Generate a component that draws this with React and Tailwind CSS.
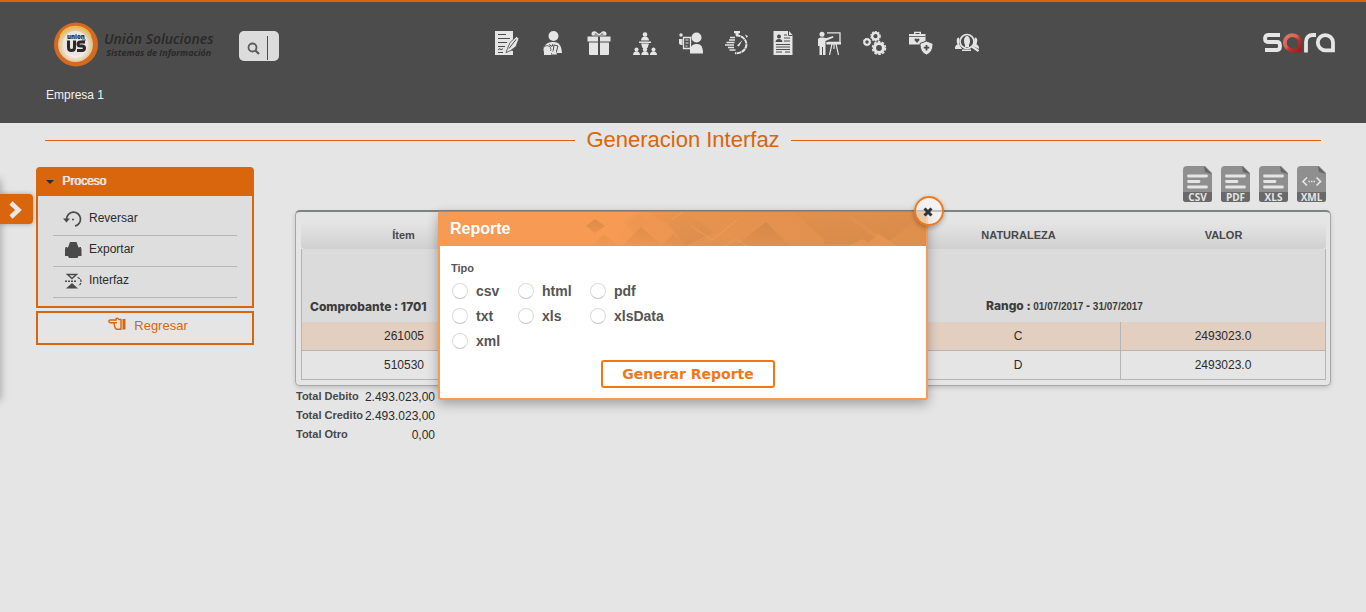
import React from "react";

const Svg = ({ children, w = 24, h = 24, className = "" }) => (
  <svg width={w} height={h} viewBox={`0 0 ${w} ${h}`} className={className} fill="#e5e5e5" aria-hidden="true">
    {children}
  </svg>
);
const BG = "#4c4c4c";

const navIcons = [
  ["Contratos", (
    <Svg>
      <path d="M0 0h18v9l-3 4-1 6 4 1v4H0z" />
      <path d="M3 3.500h8M3 7.500h12M3 11.500h9M3 15.500h7M3 19l2-1.500 1 1.500 2-1.500M3 21.500h5" stroke={BG} strokeWidth="1" fill="none" />
      <path d="M21.500 5.500l2.500 2-3 8-6 4.500-4 1.500 1.500-4 2.500-6z" stroke={BG} strokeWidth=".8" />
      <path d="M21 8.500l-7 9" stroke={BG} strokeWidth="1" />
    </Svg>
  )],
  ["Empleados", (
    <Svg>
      <circle cx="12.500" cy="5" r="5" />
      <path d="M3.500 16c1-4 5-5 9-5 5 0 8 3 8.500 11H8z" />
      <path d="M8 13.500l3 2 1-2.500M12 21l1-7 4 1-2 7" stroke={BG} strokeWidth="1" fill="none" />
      <circle cx="6" cy="18.500" r="4" stroke={BG} strokeWidth=".8" />
      <path d="M3 20h7v4H3z" />
      <path d="M10 23.500l4-6 2 6z" />
    </Svg>
  )],
  ["Beneficios", (
    <Svg>
      <path d="M5 4.500C3 1 7-.5 9 .7L12 3l3-2.300c2-1.200 6 .3 4 3.800z" />
      <path d="M7.500 3.500c0-1.300 2-1.300 3.500 0zM16.500 3.500c0-1.300-2-1.300-3.500 0z" fill={BG} />
      <path d="M.5 5.500h23v5H.500zM2 11.500h9V24H3q-1 0-1-1zM13 11.500h9V23q0 1-1 1h-8z" />
      <path d="M11 5.500h2V24h-2z" fill={BG} />
    </Svg>
  )],
  ["Organigrama", (
    <Svg>
      <circle cx="12" cy="3.500" r="2.300" />
      <path d="M8 9.500c0-5.500 8-5.500 8 0zM6 10.500h12v1.500H6zM8 12.500h8L14.500 17h-5z" />
      <circle cx="3.500" cy="18.500" r="2" /><circle cx="12" cy="18.500" r="2.200" /><circle cx="20.500" cy="18.500" r="2" />
      <path d="M0 24c0-5 7-5 7 0zM8.300 24c0-5 7.400-5 7.400 0zM17 24c0-5 7-5 7 0z" />
    </Svg>
  )],
  ["Seleccion", (
    <Svg>
      <circle cx="17.500" cy="6.500" r="5" />
      <path d="M11 22.500V18l2-3.500c2-1.500 3-1.500 5-1.500 4 0 6 3 6 9.500z" />
      <path d="M4.500 6.500h7v11h-7z" fill={BG} stroke="#e5e5e5" strokeWidth="1.300" />
      <path d="M6.500 9h3M6.500 12h3M6.500 15h2" stroke="#e5e5e5" strokeWidth="1" />
      <path d="M0 8h3.500v6Q0 14 0 12z" /><circle cx="2" cy="4" r="1.700" />
    </Svg>
  )],
  ["Tiempos", (
    <Svg>
      <path d="M11 4.600A9.500 9.500 0 0 1 21.500 13 9.500 9.500 0 0 1 10 22" stroke="#e5e5e5" strokeWidth="2" fill="none" strokeDasharray="4.500 .5" />
      <path d="M9 0h6v2.200H9zM10.500 2h3v2.500h-3zM20 3.500l3 1.500-1.300 2zM12 14.500L17.500 9 14 15.500z" />
      <path d="M5 6.500h5M4 9h6M1.500 11.500h8M0 14h9M3 16.500h6M4.500 19h6" stroke="#e5e5e5" strokeWidth="1.500" />
    </Svg>
  )],
  ["Hoja de vida", (
    <Svg>
      <path d="M2.500 0H18l3.500 4v20h-19z" />
      <path d="M17.500 0v4.500h4M13 4h3M13 7h6M13 10h6M5 13.500h14M5 16h14M5 18.500h14M5 21h6M14 21h5" stroke={BG} strokeWidth="1" fill="none" />
      <circle cx="8" cy="5.500" r="2" fill={BG} /><path d="M4.500 11c0-4 7-4 7 0z" fill={BG} />
    </Svg>
  )],
  ["Capacitacion", (
    <Svg>
      <circle cx="5" cy="3.200" r="2.500" />
      <path d="M1 8c0-2 7-2 8-.8L16 5l.5 1.500L8.500 10v14H6v-8H5v8H2.500V15H1z" />
      <path d="M10 1.800h13v9.700H11" stroke="#e5e5e5" strokeWidth="1.300" fill="none" />
      <path d="M10 11.500h14V13H10zM15 13l-2.500 11M19 13l2.500 11M17 13v5" stroke="#e5e5e5" strokeWidth="1.200" />
    </Svg>
  )],
  ["Procesos", (
    <Svg>
      <g fill="none" stroke="#e5e5e5">
        <circle cx="12.500" cy="5.200" r="3.300" strokeWidth="2.400" />
        <circle cx="12.500" cy="5.200" r="4.700" strokeWidth="1.200" strokeDasharray="1.800 1.200" />
        <circle cx="4" cy="11" r="2.700" strokeWidth="2" />
        <circle cx="4" cy="11" r="3.700" strokeWidth="1" strokeDasharray="1.500 1" />
        <circle cx="16" cy="17" r="4.500" strokeWidth="3.200" />
        <circle cx="16" cy="17" r="6.500" strokeWidth="1.500" strokeDasharray="2.600 1.480" />
      </g>
    </Svg>
  )],
  ["Salud", (
    <Svg>
      <path d="M5 3V.7h7V3h4.500v9L12 13.500H0V3z" />
      <path d="M6.500 3V2h4v1z" fill={BG} />
      <path d="M0 5.500h16.500" stroke={BG} strokeWidth=".8" />
      <path d="M8 12L5.500 9c0-2 2-2 2.500-.7.500-1.300 2.500-1.300 2.500.7z" fill={BG} />
      <path d="M17.500 10l6.500 2.500c0 6-2 9.500-6.500 11.500-4.500-2-6.500-5.500-6.500-11.500z" stroke={BG} strokeWidth="1" />
      <path d="M17.500 14v5.500M14.800 16.700h5.500" stroke={BG} strokeWidth="1.800" />
    </Svg>
  )],
  ["Consultas", (
    <Svg>
      <circle cx="12" cy="10.500" r="7" fill="none" stroke="#e5e5e5" strokeWidth="1.700" />
      <ellipse cx="12" cy="10" rx="3" ry="5" />
      <path d="M10 14h4v2h-4z" />
      <path d="M4 6.500c-3 0-2.500 4-1.500 7C0 14.500 0 16 0 18h7l-3-5zM20 6.500c3 0 2.500 4 1.500 7C24 14.500 24 16 24 18l-6-3zM7 18.500h9v1.500H7z" />
      <path d="M17 15.500l6.500 4.500" stroke="#e5e5e5" strokeWidth="2.200" />
    </Svg>
  )],
];

const BrandLogo = () => (
  <a href="#inicio" className="flex w-[162px] shrink-0 items-center gap-[5px] pt-0.5 whitespace-nowrap text-[#2a2829]" aria-label="Unión Soluciones">
    <svg width="46" height="45" viewBox="0 0 46 45" className="shrink-0">
      <defs>
        <radialGradient id="ring" cx="50%" cy="55%" r="50%">
          <stop offset="0.500" stopColor="#ffffff" /><stop offset=".72" stopColor="#e8dcc8" /><stop offset="1" stopColor="#e3bf7c" />
        </radialGradient>
      </defs>
      <circle cx="23" cy="22.500" r="22" fill="#d46a22" />
      <circle cx="22.500" cy="22.500" r="17.500" fill="url(#ring)" />
      <path d="M7 14a17.500 17.500 0 0 1 31 0" fill="none" stroke="#eebd3f" strokeWidth="1.500" />
      <circle cx="22.500" cy="21.500" r="12.500" fill="#e9e6e2" />
      <text x="14" y="16.500" fontFamily="Open Sans" fontWeight="800" fontSize="6" fill="#2a2829">union</text>
      <path d="M29 18h4" stroke="#b3382b" strokeWidth="1" />
      <g fill="none" stroke="#2a2829" strokeWidth="3">
        <path d="M15.500 18.500v7q0 3 3 3t3-3v-7M32 20h-4.500q-2.500 0-2.500 2t2.500 2h1.500q2.500 0 2.500 2.200t-2.500 2.300h-5" />
      </g>
    </svg>
    <span className="flex flex-col items-center font-['Open_Sans',sans-serif] italic">
      <span className="text-[14px] leading-4 font-semibold">Unión Soluciones</span>
      <span className="text-[9px] leading-[11px] font-bold">Sistemas de Información</span>
    </span>
  </a>
);

const SaraLogo = () => (
  <svg width="72" height="20" viewBox="0 0 72 20" role="img" aria-label="sara">
    <defs>
      <linearGradient id="sara-red" x1="0" y1="0" x2="1" y2="1">
        <stop offset="0" stopColor="#e07a62" /><stop offset=".45" stopColor="#d8604d" /><stop offset=".6" stopColor="#bf322b" /><stop offset="1" stopColor="#a01d1d" />
      </linearGradient>
    </defs>
    <g fill="none" strokeWidth="3.800" stroke="#e5e5e5">
      <path d="M17 2H5q-3 0-3 3.500T5 9h9q3 0 3 4t-3 4H2" />
      <path d="M43 19.500V9q0-7 7-7h3" />
      <path d="M70 17.300h-7.500A7.600 7.600 0 1 1 70 9.500z" />
      <path d="M37 17.300h-7.500A7.600 7.600 0 1 1 37 9.500z" stroke="url(#sara-red)" />
    </g>
  </svg>
);

const FileIcon = ({ label }) => (
  <svg width="29" height="36" viewBox="0 0 29 36" aria-hidden="true">
    <path d="M4 0h18l7 7v26q0 3-3 3H3q-3 0-3-3V4q0-4 4-4z" fill="#8f8f8f" />
    <path d="M21 0l8 8-7-2z" fill="#666" />
    <path d="M0 26h29v7q0 3-3 3H3q-3 0-3-3z" fill="#696969" />
    {label === "XML" ? (
      <g fill="none" stroke="#e5e5e5" strokeWidth="1.700">
        <path d="M10 11.500L6 15.500l4 4M19.500 11.500l4 4-4 4" />
        <path d="M11.500 15.500h7" strokeDasharray="1.500 1" />
      </g>
    ) : (
      <path d="M5.500 10h18M5.500 15.500h10.500M5.500 21h18" stroke="#e5e5e5" strokeWidth="2.800" strokeLinecap="round" />
    )}
    <text x="14.500" y="34.500" textAnchor="middle" fontFamily="Open Sans" fontWeight="700" fontSize="10" fill="#e5e5e5">{label}</text>
  </svg>
);

const ReverseIcon = () => (
  <svg width="20" height="18" viewBox="0 0 20 18" aria-hidden="true">
    <path d="M3.500 9a7 7 0 1 1 8.500 7" fill="none" stroke="#4a4a4a" strokeWidth="1.700" />
    <path d="M0 8.500h7L3.500 12.500z" fill="#4a4a4a" /><circle cx="10" cy="9.500" r="1" fill="#4a4a4a" />
  </svg>
);
const PrintIcon = () => (
  <svg width="20" height="18" viewBox="0 0 20 18" aria-hidden="true" fill="#4a4a4a">
    <path d="M7 1h6.500l2 5.500h1V6H18v1l.5 1v7h-3l-1 2H6l-1-2H2V8l.5-1V6H4v.500h1z" />
  </svg>
);
const MirrorIcon = () => (
  <svg width="20" height="18" viewBox="0 0 20 18" aria-hidden="true" fill="#4a4a4a">
    <path d="M4.500 2.500h9L9 6.500z" fill="none" stroke="#4a4a4a" strokeWidth="1.400" />
    <path d="M9 11l6 5.500H3zM2 8.500h2V10H2zM5 8.500h2V10H5zM8 8.500h2V10H8zM11 8.500h2V10h-2z" />
    <path d="M14.500 5.500q3.500 1 3.500 4t-2.500 4" fill="none" stroke="#4a4a4a" strokeWidth="1.300" strokeDasharray="2.500 1" />
  </svg>
);
const HandIcon = () => (
  <svg width="18" height="14" viewBox="0 0 18 14" aria-hidden="true" fill="none" stroke="#d9660c" strokeWidth="1.400" strokeLinejoin="round">
    <path d="M13 2.500H11L9.500 1.200Q7.500.7 8.300 3H2Q.8 3.300.8 4.300T2 5.700h4.500Q5.500 7 6.500 8q-.5 1.300.7 2.200 0 2 2 2h3.800z" />
    <path d="M6.500 5.700h2.500" />
    <path d="M14.500 2h3v10.500h-3z" fill="#d9660c" stroke="none" />
  </svg>
);

const menu = [["Reversar", ReverseIcon], ["Exportar", PrintIcon], ["Interfaz", MirrorIcon]];
const types = ["csv", "html", "pdf", "txt", "xls", "xlsData", "xml"];
const rows = [["261005", "C", "2493023.0"], ["510530", "D", "2493023.0"]];
const totals = [["Total Debito", "2.493.023,00"], ["Total Credito", "2.493.023,00"], ["Total Otro", "0,00"]];

function Header() {
  return (
    <header className="h-[123px] border-t-2 border-[#d9660c] bg-[#4c4c4c]">
      <div className="flex h-[82px] items-center pr-[31px] pl-[53px]">
        <BrandLogo />
        <label className="mt-1.5 ml-6 flex h-[30px] w-10 shrink-0 items-center rounded-[5px] bg-[#dcdcdc] pl-2" aria-label="Buscar">
          <svg width="13" height="13" viewBox="0 0 13 13" className="mt-1 shrink-0"><circle cx="5.500" cy="5.500" r="4" fill="none" stroke="#5c5c5c" strokeWidth="1.800" /><path d="M8.500 8.500l3.500 3.500" stroke="#5c5c5c" strokeWidth="2.200" /></svg>
          <input type="text" className="mt-1 ml-[7px] h-6 w-2 border-l border-[#4c4c4c] bg-transparent outline-none" />
        </label>
        <nav className="ml-[216px] flex gap-[22px]">
          {navIcons.map(([name, icon]) => (
            <a key={name} href="#modulo" aria-label={name}>{icon}</a>
          ))}
        </nav>
        <div className="ml-auto"><SaraLogo /></div>
      </div>
      <p className="pl-[46px] text-[12px] leading-[22px] text-[#f2f2f2]">Empresa 1</p>
    </header>
  );
}

function Sidebar() {
  return (
    <aside className="w-[218px] shrink-0">
      <section className="rounded-t border-2 border-[#d9660c] bg-[#dedede]">
        <h2 className="flex h-[27px] items-center gap-2 bg-[#d9660c] pb-1 pl-2 text-[12px] text-[#e8e8e8] [text-shadow:1px_0_0_#e8e8e8]">
          <svg width="8" height="4" viewBox="0 0 8 4" className="mt-0.5"><path d="M0 0h8L4 4z" fill="#2d2d2d" /></svg>
          Proceso
        </h2>
        <ul className="px-[15px] pt-[9px] pb-2">
          {menu.map(([name, Icon]) => (
            <li key={name} className="border-b border-[#b5b5b5]">
              <a href="#proceso" className="flex h-[30px] items-center gap-1.5 pb-1 pl-2.5 text-[12px] text-[#2b2b2b]"><span className="pt-0.5"><Icon /></span>{name}</a>
            </li>
          ))}
        </ul>
      </section>
      <a href="#regresar" className="mt-[3px] flex h-[34px] items-start justify-center gap-2 border-2 border-[#d9660c] pt-[3px] pl-1.5 text-[13px] leading-[19px] text-[#d9660c]">
        <span className="pt-px"><HandIcon /></span>Regresar
      </a>
    </aside>
  );
}

function Results() {
  return (
    <main className="min-w-0 flex-1">
      <div className="-mt-px mr-[5px] flex h-[36px] justify-end gap-[9px]">
        {["CSV", "PDF", "XLS", "XML"].map((t) => (
          <button key={t} type="button" aria-label={t}><FileIcon label={t} /></button>
        ))}
      </div>
      <div className="mt-2 rounded-[5px] border border-t-2 border-[#a6a6a6] border-t-[#808480] pt-[10px] pr-1 pb-[5px] pl-[5px] shadow-[0_2px_4px_rgba(0,0,0,0.15)]">
        <table className="w-full table-fixed border-separate border-spacing-0 text-center text-[12px] text-[#2b2b2b]">
          <thead>
            <tr className="h-[27px] bg-linear-to-b from-[#e5e5e5] to-[#d0d0d0] text-[11px] text-[#484848]">
              <th className="rounded-bl">Ítem</th><th /><th />
              <th>NATURALEZA</th><th className="rounded-br">VALOR</th>
            </tr>
          </thead>
          <tbody>
            <tr className="h-[73px] bg-[#dbdbdb] font-['Inter',sans-serif] text-[12px] font-extrabold text-[#3c3c3c]">
              <td colSpan={3} className="border-l border-[#b5b5b5] pb-1.5 pl-2 text-left align-bottom leading-[18px]">Comprobante : 1701</td>
              <td colSpan={2} className="border-r border-[#b5b5b5] pr-[112px] pb-1.5 align-bottom leading-[18px]">
                Rango : <span className="font-['Liberation_Sans',sans-serif] text-[10px] font-bold">01/07/2017 <b className="text-[12px]">-</b> 31/07/2017</span>
              </td>
            </tr>
            {rows.map(([item, nature, value], i) => (
              <tr key={item} className={i === 0 ? "h-[29px] bg-[#e3cfc0]" : "h-[29px]"}>
                <td className="border-b border-l border-[#b5b5b5]">{item}</td>
                <td className="border-b border-[#b5b5b5]" /><td className="border-b border-[#b5b5b5]" />
                <td className="border-r border-b border-[#b5b5b5]">{nature}</td>
                <td className="border-r border-b border-[#b5b5b5]">{value}</td>
              </tr>
            ))}
          </tbody>
        </table>
      </div>
      <dl className="mt-px w-[140px]">
        {totals.map(([name, value]) => (
          <div key={name} className="flex h-[19px] items-center justify-between pl-px text-[12px]">
            <dt className="text-[11px] font-bold text-[#484848]">{name}</dt>
            <dd className="text-[#2b2b2b]">{value}</dd>
          </div>
        ))}
      </dl>
    </main>
  );
}

function ReportDialog() {
  return (
    <div role="dialog" aria-labelledby="dialog-title" className="absolute top-[211px] left-1/2 w-[490px] -translate-x-1/2 rounded-[3px] border-2 border-t border-[#f59b58] border-t-[#e07a2a] bg-white shadow-[0_4px_12px_rgba(0,0,0,0.3)]">
      <div className="relative flex h-[34px] items-center overflow-hidden bg-[#f79b54] pl-2.5">
        <svg width="340" height="34" viewBox="0 0 340 34" className="absolute top-0 right-0" aria-hidden="true">
          <defs>
            <linearGradient id="fade"><stop offset="0" stopColor="#e4924f" stopOpacity="0" /><stop offset=".3" stopColor="#e4924f" stopOpacity=".9" /><stop offset="1" stopColor="#df8f4c" /></linearGradient>
            <linearGradient id="peak" x1="0" y1="0" x2="0" y2="1"><stop offset="0" stopColor="#c47c3e" stopOpacity=".5" /><stop offset="1" stopColor="#c47c3e" stopOpacity=".08" /></linearGradient>
            <linearGradient id="valley" x1="0" y1="0" x2="0" y2="1"><stop offset="0" stopColor="#c98142" stopOpacity=".08" /><stop offset="1" stopColor="#c98142" stopOpacity=".35" /></linearGradient>
          </defs>
          <path d="M20 34L54 0h286v34z" fill="url(#fade)" />
          <path d="M0 14l9-7 10 7-10 7zM4 34l14-11 16 11zM36 34l19-19 22 19zM75 34l12-12 14 12zM150 34l30-24 24 24z" fill="url(#peak)" />
          <path d="M62 0h32L80 11zM100 34l-20-24 20-10 28 20zM208 0h62l-34 26zM235 12l20-12 43 32h-60zM260 0h80l-38 30z" fill="url(#valley)" />
          <path d="M262 34l14-7 6 4 11-9 18 12z" fill="#ec9753" fillOpacity=".7" />
          <path d="M36 10L50 0l14 10-14 10z" fill="#e8944f" fillOpacity=".4" />
          <path d="M105 14l21 14 25-20M140 34l10-7 10 7M86 8L96 0" stroke="#f2a163" strokeWidth=".7" fill="none" />
        </svg>
        <h2 id="dialog-title" className="relative text-[16px] font-bold text-white">Reporte</h2>
      </div>
      <button type="button" aria-label="Cerrar" className="absolute -top-4 -right-[18px] flex size-[30px] items-center justify-center rounded-full border-2 border-[#f07818] bg-white/50 shadow-[0_2px_5px_rgba(0,0,0,0.3)]">
        <svg width="10" height="10" viewBox="0 0 10 10" className="mt-0.5 mr-[3px]"><path d="M1.500 1.500l7 7M8.500 1.500l-7 7" stroke="#333" strokeWidth="3" /></svg>
      </button>
      <form className="px-2 pt-3 pb-2.5" onSubmit={(e) => e.preventDefault()}>
        <fieldset>
          <legend className="pl-[3px] text-[11px] leading-[21px] font-bold text-[#555]">Tipo</legend>
          <div className="grid w-fit grid-cols-[66px_72px_auto] gap-y-px pl-1">
            {types.map((t) => (
              <label key={t} className="flex h-6 items-center gap-2 text-[14px] font-bold text-[#555]">
                <input type="radio" name="tipo" value={t} className="size-4 appearance-none rounded-full border border-[#dcdcdc] border-b-[#c4c4c4] bg-white checked:bg-[#f07818]" />
                {t}
              </label>
            ))}
          </div>
        </fieldset>
        <div className="flex justify-center pt-[7px] pl-2.5">
          <button type="submit" className="h-7 w-[174px] rounded-[3px] border-2 border-[#f07818] font-['DejaVu_Sans',sans-serif] text-[14px] font-bold text-[#f07818]">Generar Reporte</button>
        </div>
      </form>
    </div>
  );
}

export default function App() {
  return (
    <div className="relative min-h-screen overflow-hidden bg-[#e5e5e5] font-['Liberation_Sans',Arial,sans-serif]">
      <Header />
      <div className="mx-[45px] flex h-[34px] items-center gap-[11px] text-[#d9660c]">
        <span className="h-px flex-1 bg-[#d9660c]" />
        <h1 className="text-[22px] leading-8">Generacion Interfaz</h1>
        <span className="h-px flex-1 bg-[#d9660c]" />
      </div>
      <div className="mt-2.5 flex items-start gap-[41px] pr-[35px] pl-9">
        <Sidebar />
        <Results />
      </div>
      <div className="absolute top-[180px] -left-2 h-[220px] w-2 shadow-[0_0_8px_rgba(0,0,0,0.35)]" />
      <button type="button" aria-label="Abrir panel" className="absolute top-[194px] left-0 flex h-[30px] w-[33px] items-center rounded-r bg-[#d9660c] pl-[9px] shadow-[0_0_5px_rgba(0,0,0,0.3)]">
        <svg width="14" height="18" viewBox="0 0 14 18" className="mt-0.5"><path d="M2 2l7.500 7L2 16" fill="none" stroke="#e8e8e8" strokeWidth="4.500" /></svg>
      </button>
      <ReportDialog />
    </div>
  );
}
